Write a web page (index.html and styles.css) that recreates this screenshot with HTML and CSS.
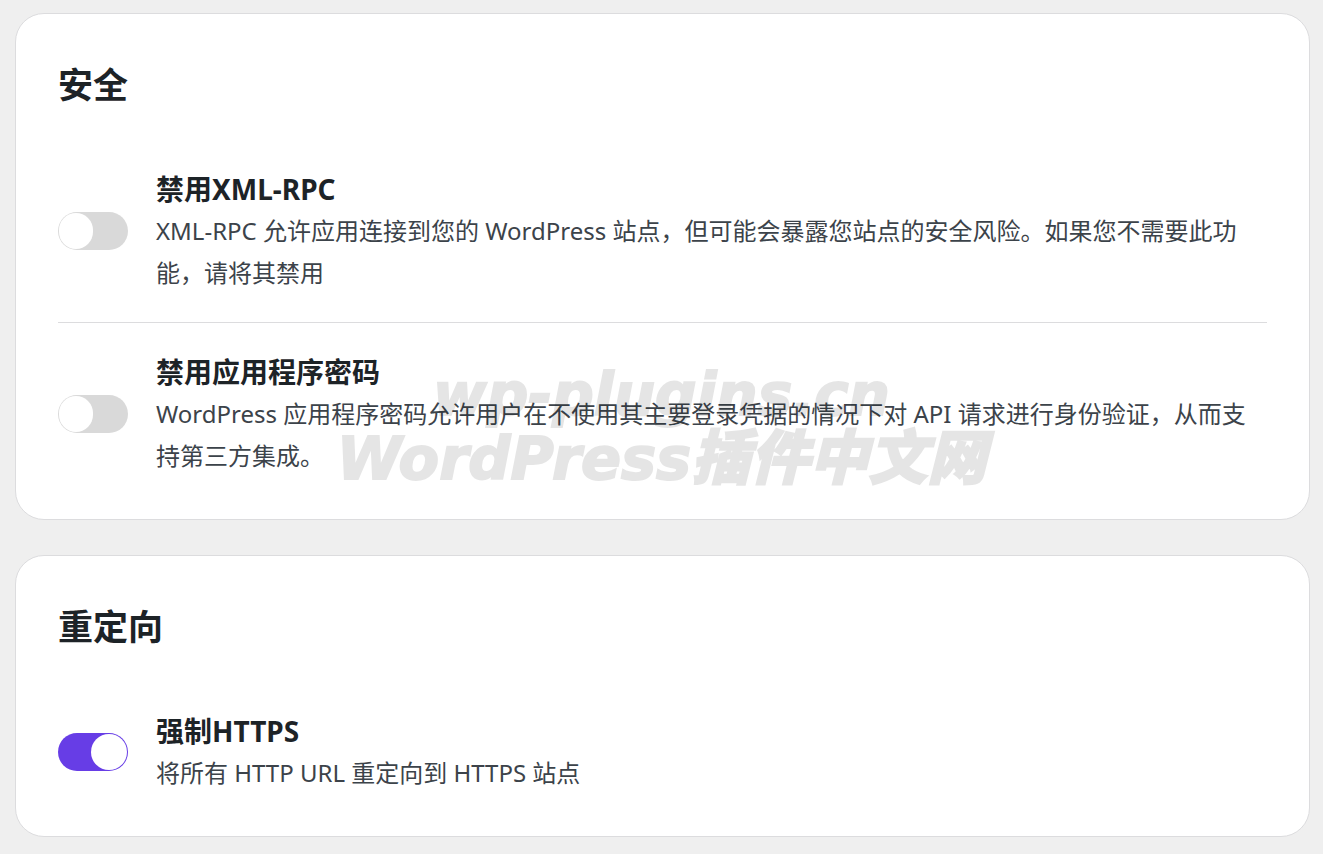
FILE: index.html
```html
<!DOCTYPE html>
<html lang="zh-CN">
<head>
<meta charset="utf-8">
<meta name="viewport" content="width=device-width, initial-scale=1">
<title>安全</title>
<link rel="stylesheet" href="styles.css">
</head>
<body>
<main class="settings">
  <section class="card">
    <h2 class="card-title">安全</h2>
    <div class="option">
      <input class="toggle" type="checkbox" role="switch" id="xmlrpc" aria-describedby="xmlrpc-desc">
      <div class="option-text">
        <label class="option-title" for="xmlrpc">禁用XML-RPC</label>
        <p class="option-desc" id="xmlrpc-desc">XML-RPC 允许应用连接到您的 WordPress 站点，但可能会暴露您站点的安全风险。如果您不需要此功能，请将其禁用</p>
      </div>
    </div>
    <div class="option">
      <input class="toggle" type="checkbox" role="switch" id="app-passwords" aria-describedby="app-passwords-desc">
      <div class="option-text">
        <label class="option-title" for="app-passwords">禁用应用程序密码</label>
        <p class="option-desc" id="app-passwords-desc">WordPress 应用程序密码允许用户在不使用其主要登录凭据的情况下对 API 请求进行身份验证，从而支持第三方集成。</p>
      </div>
    </div>
  </section>
  <section class="card">
    <h2 class="card-title">重定向</h2>
    <div class="option">
      <input class="toggle" type="checkbox" role="switch" id="https" aria-describedby="https-desc" checked>
      <div class="option-text">
        <label class="option-title" for="https">强制HTTPS</label>
        <p class="option-desc" id="https-desc">将所有 HTTP URL 重定向到 HTTPS 站点</p>
      </div>
    </div>
  </section>
</main>
<div class="watermark"><span>wp-plugins.cn</span><span class="watermark-name">WordPress插件中文网</span></div>
</body>
</html>
```
FILE: styles.css
```css
* {
  box-sizing: border-box;
}

body {
  margin: 0;
  background: #efefef;
  color: #1d2327;
  font-family: "Noto Sans", "Noto Sans CJK SC", sans-serif;
}

.settings {
  display: flex;
  flex-direction: column;
  gap: 35px;
  padding: 13px 13px 17px 15px;
}

.card {
  padding: 43px 42px 14px;
  background: #fff;
  border: 1px solid #dcdcde;
  border-radius: 29px;
}

.card-title {
  margin: 0 0 27px;
  font-size: 35px;
  line-height: 56px;
  font-weight: 700;
}

.option {
  display: flex;
  align-items: center;
  gap: 28px;
  padding: 28px 0;
}

.option + .option {
  border-top: 1px solid #dcdcde;
}

.option-text {
  flex: 1;
  padding-right: 8px;
}

.option-title {
  display: block;
  font-size: 28px;
  line-height: 42px;
  font-weight: 700;
}

.option-desc {
  margin: 0;
  color: #3c434a;
  font-size: 24px;
  line-height: 42px;
}

.toggle {
  appearance: none;
  flex: none;
  display: flex;
  width: 70px;
  height: 38px;
  margin: 0;
  padding: 1px;
  border-radius: 19px;
  background: #d9d9d9;
}

.toggle::before {
  content: "";
  width: 34px;
  height: 36px;
  border-radius: 18px;
  background: #fff;
}

.toggle:checked {
  justify-content: flex-end;
  background: #673de6;
}

.toggle:checked::before {
  width: 36px;
}

.watermark {
  position: fixed;
  inset: 0;
  display: flex;
  flex-direction: column;
  align-items: center;
  justify-content: center;
  color: #000;
  -webkit-text-stroke: 2px #000;
  opacity: 0.1;
  font-family: "DejaVu Sans", "Noto Sans CJK SC", sans-serif;
  font-size: 58px;
  line-height: 64px;
  font-weight: 900;
  font-style: italic;
  pointer-events: none;
}

.watermark-name {
  font-size: 59px;
}
```
